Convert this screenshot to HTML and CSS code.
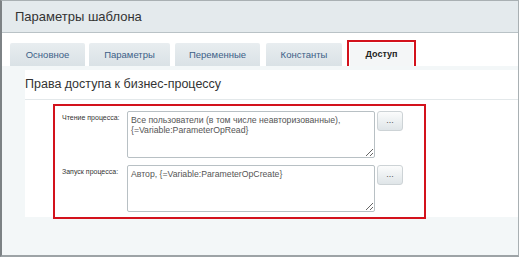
FILE: index.html
```html
<!DOCTYPE html>
<html lang="ru">
<head>
<meta charset="utf-8">
<title>Параметры шаблона</title>
<link rel="stylesheet" href="styles.css">
</head>
<body>
<div class="window">
  <div class="header">Параметры шаблона</div>
  <div class="body">
    <div class="tabs">
      <div class="tab t1">Основное</div>
      <div class="tab t2">Параметры</div>
      <div class="tab t3">Переменные</div>
      <div class="tab t4">Константы</div>
      <div class="tab active">Доступ</div>
    </div>
    <div class="panel">
      <div class="card">
        <div class="card-title">Права доступа к бизнес-процессу</div>
        <div class="form-wrap">
          <div class="highlight">
            <div class="row">
              <div class="label">Чтение процесса:</div>
              <textarea class="field">Все пользователи (в том числе неавторизованные),
{=Variable:ParameterOpRead}</textarea>
              <div class="btn">...</div>
            </div>
            <div class="row">
              <div class="label">Запуск процесса:</div>
              <textarea class="field">Автор, {=Variable:ParameterOpCreate}</textarea>
              <div class="btn">...</div>
            </div>
          </div>
        </div>
      </div>
    </div>
  </div>
</div>
</body>
</html>
```

FILE: styles.css
```css
html, body {
  margin: 0;
  padding: 0;
  background: #ffffff;
  width: 520px;
  height: 258px;
  overflow: hidden;
}
body {
  font-family: "Liberation Sans", Arial, sans-serif;
  color: #333;
}
.window {
  box-sizing: border-box;
  width: 519px;
  height: 257px;
  border: 1px solid #a9b0b3;
  border-left: 2px solid #7d8285;
  border-bottom: 2px solid #9da3a6;
  display: flex;
  flex-direction: column;
  background: #fff;
}
.header {
  height: 32px;
  box-sizing: border-box;
  background: #e4eaed;
  border-bottom: 1px solid #b9c2c6;
  font-size: 13px;
  line-height: 31px;
  padding-left: 13px;
  color: #333;
}
.body {
  flex: 1;
  display: flex;
  flex-direction: column;
  background: #f4f7f8;
}
.tabs {
  background: #fff;
  display: flex;
  align-items: flex-end;
  gap: 4px;
  padding: 10px 0 0 8px;
  height: 23px;
}
.tab {
  height: 23px;
  box-sizing: border-box;
  background: linear-gradient(#e8edf0, #dae2e6);
  color: #3d5f88;
  font-size: 9.5px;
  line-height: 23px;
  text-align: center;
  border-radius: 2px 2px 0 0;
}
.t1 { width: 75px; }
.t2 { width: 81px; }
.t3 { width: 85px; margin-left: 1px; }
.t4 { width: 76px; margin-left: 2px; }
.active {
  width: 63px;
  margin-left: 4px;
  border-radius: 0;
  background: #f4f6f7;
  color: #222;
  font-weight: bold;
  font-size: 9px;
  outline: 2px solid #d3121c;
  outline-offset: 1px;
}
.panel {
  flex: 1;
  margin-left: 8px;
  padding: 4px 0 0 15px;
  background: #f3f7f8;
}
.card {
  background: #fff;
  height: 147px;
}
.card-title {
  height: 30px;
  box-sizing: border-box;
  border-bottom: 1px solid #e3e8ea;
  font-size: 12.5px;
  line-height: 28px;
  color: #333;
}
.form-wrap {
  padding: 4px 0 0 28px;
}
.highlight {
  width: 373px;
  height: 115px;
  box-sizing: border-box;
  border: 2px solid #d3121c;
  padding: 5px 0 0 0;
  display: flex;
  flex-direction: column;
  gap: 7px;
}
.row {
  display: flex;
  align-items: flex-start;
}
.label {
  width: 72px;
  box-sizing: border-box;
  padding: 3px 0 0 7px;
  font-size: 7px;
  color: #333;
  white-space: nowrap;
}
.field {
  width: 248px;
  height: 47px;
  box-sizing: border-box;
  margin: 0;
  border: 1px solid #b8c0c4;
  border-radius: 2px;
  padding: 3px 3px;
  font-family: "Liberation Sans", Arial, sans-serif;
  font-size: 8.7px;
  line-height: 10px;
  color: #555;
  background: #fff;
  overflow: hidden;
}
.btn {
  width: 26px;
  height: 20px;
  box-sizing: border-box;
  margin-left: 2px;
  border: 1px solid #cdd3d6;
  border-radius: 3px;
  background: linear-gradient(#fbfcfc, #dfe5e8);
  font-size: 9px;
  line-height: 16px;
  text-align: center;
  color: #555;
}
```
